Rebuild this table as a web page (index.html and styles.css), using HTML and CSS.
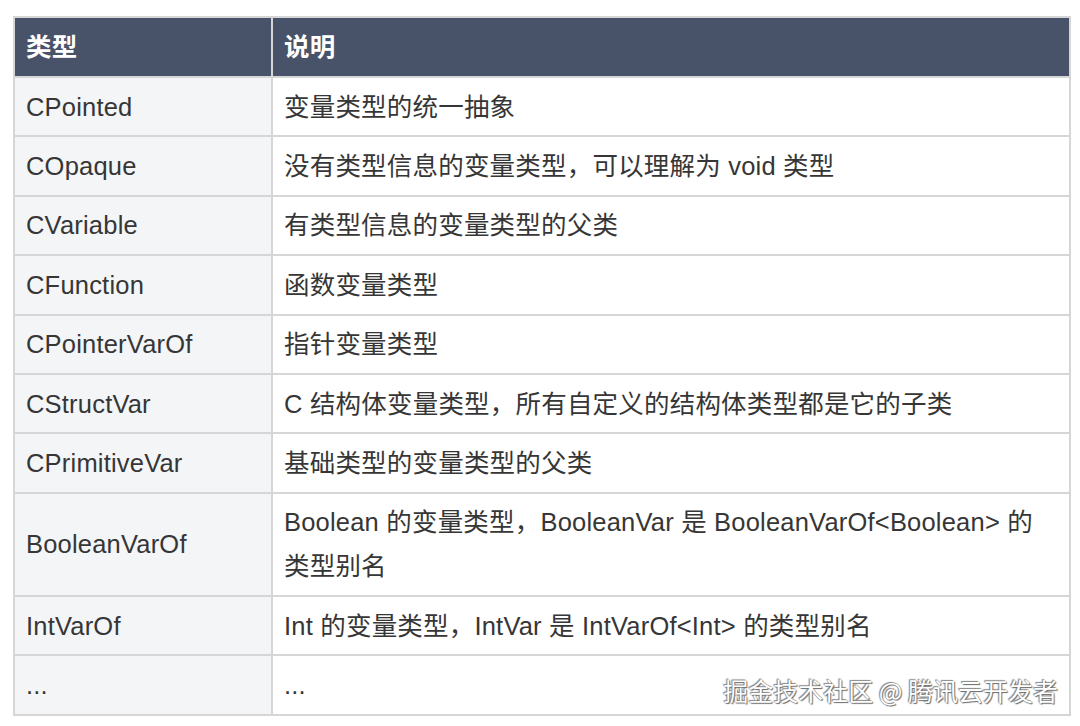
FILE: index.html
```html
<!DOCTYPE html>
<html lang="zh-CN">
<head>
<meta charset="utf-8">
<title>类型说明</title>
<link rel="stylesheet" href="styles.css">
</head>
<body>
<div class="page">
  <table class="types">
    <thead>
      <tr><th class="c1">类型</th><th class="c2">说明</th></tr>
    </thead>
    <tbody>
      <tr><td class="c1">CPointed</td><td class="c2">变量类型的统一抽象</td></tr>
      <tr><td class="c1">COpaque</td><td class="c2">没有类型信息的变量类型，可以理解为 void 类型</td></tr>
      <tr><td class="c1">CVariable</td><td class="c2">有类型信息的变量类型的父类</td></tr>
      <tr><td class="c1">CFunction</td><td class="c2">函数变量类型</td></tr>
      <tr><td class="c1">CPointerVarOf</td><td class="c2">指针变量类型</td></tr>
      <tr><td class="c1">CStructVar</td><td class="c2">C 结构体变量类型，所有自定义的结构体类型都是它的子类</td></tr>
      <tr><td class="c1">CPrimitiveVar</td><td class="c2">基础类型的变量类型的父类</td></tr>
      <tr><td class="c1">BooleanVarOf</td><td class="c2">Boolean 的变量类型，BooleanVar 是 BooleanVarOf&lt;Boolean&gt; 的类型别名</td></tr>
      <tr><td class="c1">IntVarOf</td><td class="c2">Int 的变量类型，IntVar 是 IntVarOf&lt;Int&gt; 的类型别名</td></tr>
      <tr><td class="c1">...</td><td class="c2">...</td></tr>
    </tbody>
  </table>
  <div class="watermark">掘金技术社区 @ 腾讯云开发者</div>
</div>
</body>
</html>
```

FILE: styles.css
```css
html, body {
  margin: 0;
  padding: 0;
  background: #ffffff;
}

.page {
  position: relative;
  width: 1080px;
  height: 726px;
  padding: 16px 0 0 13px;
  box-sizing: border-box;
  font-family: "Liberation Sans", "Noto Sans CJK SC", sans-serif;
}

.types {
  border-collapse: collapse;
  width: 1058px;
  table-layout: fixed;
  font-size: 25.5px;
  letter-spacing: 0.2px;
  color: #363636;
}

.types th,
.types td {
  border: 2px solid #d6d6d6;
  text-align: left;
  vertical-align: middle;
  line-height: 44px;
  padding: 6.7px 12px 6.7px 11px;
}

.types th {
  background: #48536a;
  color: #ffffff;
  font-weight: bold;
  padding-top: 7px;
  padding-bottom: 7px;
}

.types .c1 {
  width: 233px;
}

.types td.c1 {
  background: #f4f5f6;
}

.types td.c2 {
  background: #ffffff;
}

.watermark {
  position: absolute;
  right: 22px;
  top: 672px;
  font-family: "Noto Sans CJK SC", sans-serif;
  font-size: 25px;
  line-height: 36px;
  color: #ffffff;
  text-shadow: 0 0 1px #6a6a6a, 1px 1px 1px #6a6a6a, -1px -1px 1px #8a8a8a;
}
```
